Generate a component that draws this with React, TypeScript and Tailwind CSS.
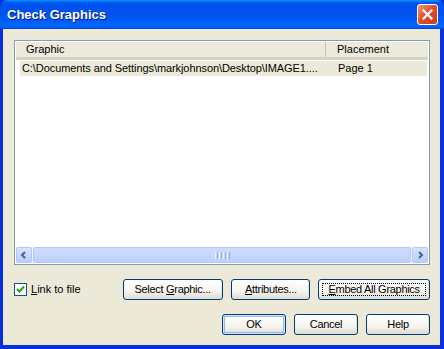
import React from 'react';

const font = { fontFamily: '"Liberation Sans", Arial, sans-serif' };

const XpButton = ({
  children,
  w,
  isDefault = false,
  focused = false,
}: {
  children: React.ReactNode;
  w: string;
  isDefault?: boolean;
  focused?: boolean;
}) => (
  <div
    className={`${w} h-[21px] relative flex items-center justify-center rounded-[3px] border border-[#003C74] bg-[linear-gradient(to_bottom,#FFFFFF_0%,#F5F4EF_60%,#E3E1D8_90%,#D6D0C5_100%)] text-[11px] tracking-[-0.3px] text-black ${
      isDefault ? 'shadow-[inset_0_0_0_1px_#CEE7FF,inset_0_0_0_2px_#98B8EA]' : 'shadow-[inset_-1px_-1px_0_#E4E2D6]'
    }`}
  >
    {focused && <div className="absolute inset-[3px] border border-dotted border-black" />}
    <span className="relative">{children}</span>
  </div>
);

const ScrollArrow = ({ dir }: { dir: 'left' | 'right' }) => (
  <div className="w-[16px] h-[16px] rounded-[2px] border border-[#B4C8F6] bg-[linear-gradient(to_bottom,#D6E2FE,#BCCEFB)] flex items-center justify-center">
    <svg width="8" height="8" viewBox="0 0 8 8">
      {dir === 'left' ? (
        <path d="M5 1 L2 4 L5 7" fill="none" stroke="#4D6185" strokeWidth="2" />
      ) : (
        <path d="M3 1 L6 4 L3 7" fill="none" stroke="#4D6185" strokeWidth="2" />
      )}
    </svg>
  </div>
);

export default function App() {
  return (
    <div className="w-[444px] h-[349px] flex flex-col bg-[#0831D9]" style={font}>
      {/* Title bar */}
      <div className="h-[29px] flex items-center pl-[7px] pr-[6px] rounded-t-[7px] bg-[linear-gradient(to_bottom,#0997FF_0%,#0053EE_10%,#0050EE_45%,#0063FC_85%,#0066FF_92%,#0053EE_97%,#003DD7_100%)]">
        <span className="flex-1 text-white font-bold text-[13px] [text-shadow:1px_1px_0_#0A1883]">Check Graphics</span>
        <div className="w-[21px] h-[21px] rounded-[3px] border border-white bg-[linear-gradient(135deg,#F09A7F_0%,#E0512C_45%,#C8391A_100%)] flex items-center justify-center">
          <svg width="11" height="11" viewBox="0 0 11 11">
            <path d="M1.5 1.5 L9.5 9.5 M9.5 1.5 L1.5 9.5" stroke="white" strokeWidth="2.2" strokeLinecap="square" />
          </svg>
        </div>
      </div>

      {/* Client area */}
      <div className="flex-1 ml-[3px] mr-[4px] mb-[4px] bg-[#ECE9D8] flex flex-col pt-[11px] pl-[11px] pr-[10px]">
        {/* List view */}
        <div className="h-[225px] border border-[#7F9DB9] bg-white flex flex-col p-[1px]">
          <div className="h-[18px] flex items-center text-[11px] text-black bg-[#EBEADB] border-b-[3px] border-[#D6D2C2] shrink-0">
            <div className="w-[310px] pl-[10px] h-full flex items-center border-r border-[#C7C5B2]">Graphic</div>
            <div className="pl-[11px]">Placement</div>
          </div>
          <div className="flex-1 pt-[1px]">
            <div className="h-[15px] ml-[4px] mr-[1px] bg-[#ECE9D8] flex items-center text-[11px] text-black">
              <div className="w-[306px] pl-[2px] whitespace-nowrap overflow-hidden tracking-[-0.08px]">
                C:\Documents and Settings\markjohnson\Desktop\IMAGE1....
              </div>
              <div className="pl-[12px]">Page 1</div>
            </div>
          </div>
          <div className="h-[16px] flex bg-[#F3F4F8] shrink-0">
            <ScrollArrow dir="left" />
            <div className="flex-1 mx-[1px] rounded-[2px] border border-[#B4C8F6] bg-[linear-gradient(to_bottom,#CEDCFC,#BDD0FB)] flex items-center justify-center gap-[1px]">
              <div className="w-[1px] h-[7px] bg-[#EEF4FE]" />
              <div className="w-[1px] h-[7px] bg-[#8CB0F8]" />
              <div className="w-[1px] h-[7px] bg-[#EEF4FE]" />
              <div className="w-[1px] h-[7px] bg-[#8CB0F8]" />
              <div className="w-[1px] h-[7px] bg-[#EEF4FE]" />
              <div className="w-[1px] h-[7px] bg-[#8CB0F8]" />
              <div className="w-[1px] h-[7px] bg-[#EEF4FE]" />
              <div className="w-[1px] h-[7px] bg-[#8CB0F8]" />
            </div>
            <ScrollArrow dir="right" />
          </div>
        </div>

        {/* Options row */}
        <div className="mt-[14px] flex items-center h-[21px]">
          <div className="flex items-center gap-[4px] w-[109px]">
            <div className="w-[13px] h-[13px] border border-[#1C5180] bg-white flex items-center justify-center">
              <svg width="9" height="9" viewBox="0 0 9 9">
                <path d="M1 4 L3.5 6.5 L8 1.5" fill="none" stroke="#21A121" strokeWidth="2" />
              </svg>
            </div>
            <span className="text-[11px] text-black">
              <span className="underline">L</span>ink to file
            </span>
          </div>
          <XpButton w="w-[100px]">
            Select <span className="underline">G</span>raphic...
          </XpButton>
          <div className="w-[9px]" />
          <XpButton w="w-[79px]">
            <span className="underline">A</span>ttributes...
          </XpButton>
          <div className="w-[8px]" />
          <XpButton w="w-[112px]" focused>
            <span className="underline">E</span>mbed All Graphics
          </XpButton>
        </div>

        {/* Dialog buttons */}
        <div className="mt-[14px] flex justify-end gap-[8px] h-[21px]">
          <XpButton w="w-[64px]" isDefault>
            OK
          </XpButton>
          <XpButton w="w-[64px]">Cancel</XpButton>
          <XpButton w="w-[64px]">Help</XpButton>
        </div>
      </div>
    </div>
  );
}
